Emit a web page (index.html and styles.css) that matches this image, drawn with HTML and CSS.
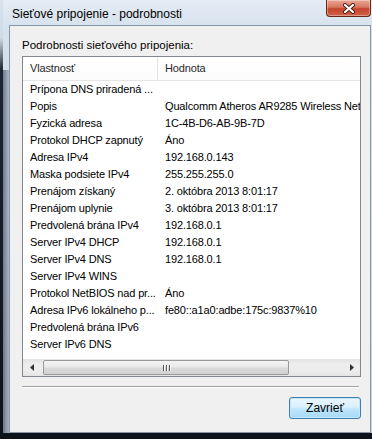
FILE: index.html
```html
<!DOCTYPE html>
<html lang="sk">
<head>
  <meta charset="UTF-8">
  <meta name="viewport" content="width=device-width, initial-scale=1.0">
  <title>Sieťové pripojenie - podrobnosti</title>
  <link rel="stylesheet" href="styles.css">
</head>
<body>
  <div class="window">
    <div class="titlebar">
      <span class="title">Sieťové pripojenie - podrobnosti</span>
      <button class="close" aria-label="Zavrieť">
        <svg width="14" height="11" viewBox="0 0 14 11">
          <path d="M3 2 L11 9 M11 2 L3 9" stroke="#4a1a10" stroke-width="4" stroke-linecap="round"/>
          <path d="M3 2 L11 9 M11 2 L3 9" stroke="#fff" stroke-width="2.2" stroke-linecap="round"/>
        </svg>
      </button>
    </div>

    <div class="client">
      <div class="caption">Podrobnosti sieťového pripojenia:</div>

      <div class="listview">
        <div class="lv-head">
          <div class="col col-name">Vlastnosť</div>
          <div class="col col-value">Hodnota</div>
        </div>
        <div class="lv-body">
          <div class="row"><div class="col col-name">Prípona DNS priradená ...</div><div class="col col-value"></div></div>
          <div class="row"><div class="col col-name">Popis</div><div class="col col-value">Qualcomm Atheros AR9285 Wireless Network Adapter</div></div>
          <div class="row"><div class="col col-name">Fyzická adresa</div><div class="col col-value">1C-4B-D6-AB-9B-7D</div></div>
          <div class="row"><div class="col col-name">Protokol DHCP zapnutý</div><div class="col col-value">Áno</div></div>
          <div class="row"><div class="col col-name">Adresa IPv4</div><div class="col col-value">192.168.0.143</div></div>
          <div class="row"><div class="col col-name">Maska podsiete IPv4</div><div class="col col-value">255.255.255.0</div></div>
          <div class="row"><div class="col col-name">Prenájom získaný</div><div class="col col-value">2. októbra 2013 8:01:17</div></div>
          <div class="row"><div class="col col-name">Prenájom uplynie</div><div class="col col-value">3. októbra 2013 8:01:17</div></div>
          <div class="row"><div class="col col-name">Predvolená brána IPv4</div><div class="col col-value">192.168.0.1</div></div>
          <div class="row"><div class="col col-name">Server IPv4 DHCP</div><div class="col col-value">192.168.0.1</div></div>
          <div class="row"><div class="col col-name">Server IPv4 DNS</div><div class="col col-value">192.168.0.1</div></div>
          <div class="row"><div class="col col-name">Server IPv4 WINS</div><div class="col col-value"></div></div>
          <div class="row"><div class="col col-name">Protokol NetBIOS nad pr...</div><div class="col col-value">Áno</div></div>
          <div class="row"><div class="col col-name">Adresa IPv6 lokálneho p...</div><div class="col col-value">fe80::a1a0:adbe:175c:9837%10</div></div>
          <div class="row"><div class="col col-name">Predvolená brána IPv6</div><div class="col col-value"></div></div>
          <div class="row"><div class="col col-name">Server IPv6 DNS</div><div class="col col-value"></div></div>
        </div>
        <div class="hscroll">
          <div class="sb-btn">
            <svg width="4" height="7" viewBox="0 0 4 7"><path d="M4 0 L0 3.5 L4 7 Z" fill="#333"/></svg>
          </div>
          <div class="sb-track">
            <div class="sb-thumb"><span class="grip"></span><span class="grip"></span><span class="grip"></span></div>
          </div>
          <div class="sb-btn">
            <svg width="4" height="7" viewBox="0 0 4 7"><path d="M0 0 L4 3.5 L0 7 Z" fill="#333"/></svg>
          </div>
        </div>
      </div>

      <div class="separator"></div>

      <div class="actions">
        <button class="btn">Zavrieť</button>
      </div>
    </div>
  </div>
</body>
</html>
```

FILE: styles.css
```css
html, body {
  height: 439px;
  overflow: hidden;
}

body {
  margin: 0;
  font-family: 'Liberation Sans', Arial, sans-serif;
  font-size: 11px;
  color: #000;
  background: linear-gradient(to bottom, #d7e2ee 0, #cdd9e6 38px, #1d2535 70px, #0e121a 100%);
}

/* glass frame: light at the top, the dark desktop shows through lower down */
.window {
  margin-left: 3px;
  width: 369px;
  height: 433px;
  padding: 0 1px 0 6px;
  box-sizing: border-box;
  background:
    linear-gradient(to right, rgba(30, 40, 62, 0.55) 0, rgba(30, 40, 62, 0.2) 6px, transparent 6px) 0 70px / 100% 100% no-repeat,
    linear-gradient(to bottom, #e4ecf5 0, #d6e1ec 30px, #c8d4e0 100%);
  display: flex;
  flex-direction: column;
}

.titlebar {
  height: 25px;
  display: flex;
  justify-content: space-between;
  align-items: flex-start;
}

.title {
  font-size: 12px;
  margin: 7px 0 0 3px;
  color: #000;
}

.close {
  width: 45px;
  height: 17px;
  padding: 0;
  border: 1px solid #6b2418;
  border-top: none;
  border-radius: 0 0 4px 4px;
  background: linear-gradient(to bottom, #e9a797 0, #d8755c 45%, #c3432a 55%, #d0654a 100%);
  display: flex;
  align-items: center;
  justify-content: center;
  box-shadow: inset 0 0 0 1px rgba(255,255,255,0.35);
}

.client {
  flex: 1;
  background: #f0f0f0;
  border: 1px solid #8597aa;
  padding: 12px 9px 0 12px;
  display: flex;
  flex-direction: column;
}

.caption {
  height: 15px;
  line-height: 15px;
  font-size: 11.5px;
}

.listview {
  margin-top: 3px;
  width: 339px;
  height: 321px;
  box-sizing: border-box;
  border: 1px solid #828790;
  background: #fff;
  display: flex;
  flex-direction: column;
  overflow: hidden;
}

.lv-head {
  height: 23px;
  display: flex;
  border-bottom: 1px solid #e5e5e5;
  background: linear-gradient(to bottom, #fff 0, #fcfcfc 100%);
  color: #2a2a2a;
}

.lv-head .col {
  line-height: 23px;
}

.lv-head .col-name {
  border-right: 1px solid #e3e3e3;
}

.row {
  height: 17px;
  display: flex;
  line-height: 17px;
}

.col {
  white-space: nowrap;
  overflow: hidden;
  box-sizing: border-box;
  padding-left: 7px;
  letter-spacing: -0.15px;
}

.col-name {
  width: 135px;
  flex: none;
}

.col-value {
  flex: 1;
}

.lv-body {
  flex: 1;
}

.hscroll {
  height: 17px;
  display: flex;
  background: linear-gradient(to bottom, #e2e2e2 0, #ededed 30%, #ededed 70%, #e4e4e4 100%);
}

.sb-btn {
  width: 17px;
  display: flex;
  align-items: center;
  justify-content: center;
}

.sb-track {
  flex: 1;
  display: flex;
  align-items: center;
  padding-left: 3px;
}

.sb-thumb {
  width: 246px;
  height: 15px;
  box-sizing: border-box;
  border: 1px solid #999;
  border-radius: 2px;
  background: linear-gradient(to bottom, #f4f4f4 0, #e9e9e9 45%, #d9d9d9 55%, #d2d2d2 100%);
  display: flex;
  align-items: center;
  justify-content: center;
  gap: 2px;
}

.grip {
  width: 1px;
  height: 6px;
  background: #555;
  box-shadow: 1px 0 0 #fff;
}

.separator {
  margin-top: 9px;
  width: 337px;
  height: 1px;
  background: #a0a0a0;
  border-bottom: 1px solid #fff;
}

.actions {
  display: flex;
  justify-content: flex-end;
  margin-top: 9px;
}

.btn {
  width: 72px;
  height: 22px;
  padding: 0;
  font-family: inherit;
  font-size: 12px;
  color: #000;
  border: 1px solid #3c7fb1;
  border-radius: 3px;
  background: linear-gradient(to bottom, #eaf6fd 0, #d9f0fc 45%, #bee6fd 55%, #a7d9f5 100%);
  box-shadow: inset 0 0 0 1px #c4e5f6;
}
```
